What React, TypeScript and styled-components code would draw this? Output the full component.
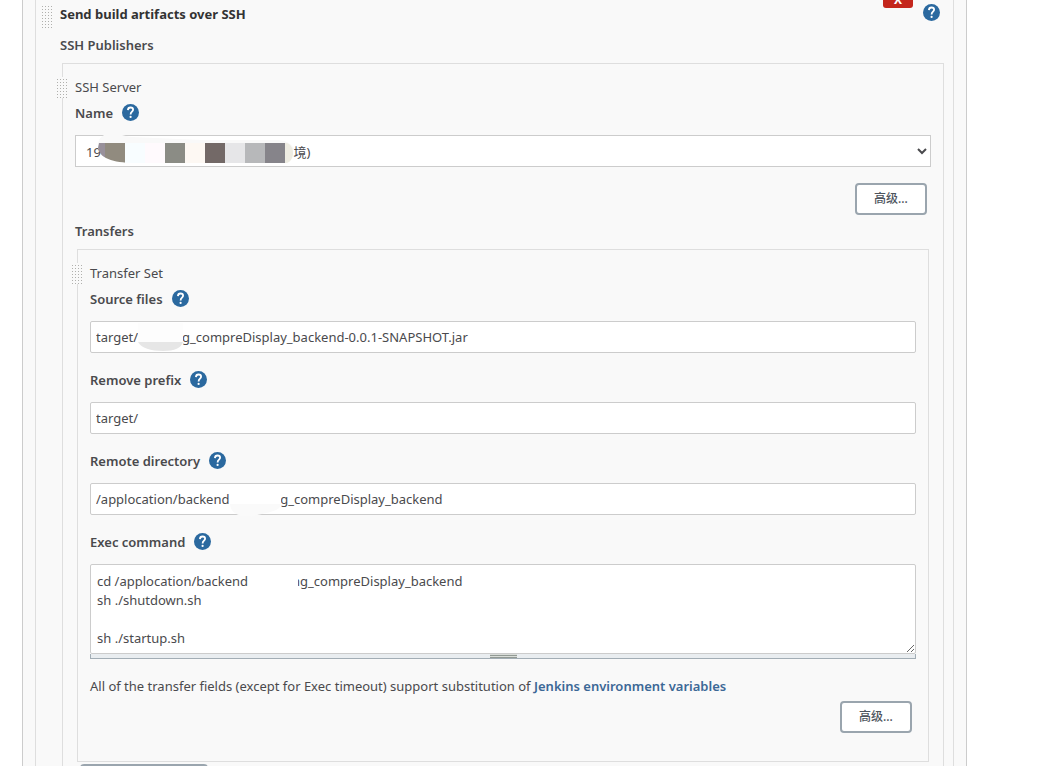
import React, { useState } from "react";
import styled, { createGlobalStyle } from "styled-components";

const GlobalStyle = createGlobalStyle`
  *, *::before, *::after { box-sizing: border-box; }
  body {
    margin: 0;
    background: #fff;
    color: #4a4a4d;
    font: 400 13px/20px "Noto Sans", "Noto Sans CJK SC", sans-serif;
  }
`;

const Viewport = styled.div`
  height: 100vh;
  overflow: hidden;
`;

const Panel = styled.main`
  margin: -20px 84px 0 22px;
  padding: 0 12px;
  background: #f9f9f9;
  border: solid #ccc;
  border-width: 0 1px;
`;

const Chunk = styled.section`
  padding: 20px 9px 60px 0;
  border: solid #dedede;
  border-width: 0 1px;
`;

const Header = styled.header`
  display: flex;
  align-items: flex-start;
  height: 35px;
  padding: 4px 4px 0 5px;
`;

const Title = styled.h2`
  flex: 1;
  margin: 0 0 0 7px;
  font-size: 13px;
  line-height: 20px;
  font-weight: 700;
  color: #333;
`;

const DeleteButton = styled.button`
  display: flex;
  align-items: flex-end;
  justify-content: center;
  width: 30px;
  height: 24px;
  margin: -20px 10px 0 0;
  padding: 0;
  border: 0;
  border-radius: 3px;
  background: #c4261c;
  color: #fff;
  font: 700 12px/16px "Noto Sans", sans-serif;
`;

const HelpButton = styled.button`
  display: block;
  width: 17px;
  height: 17px;
  padding: 0;
  border: 0;
  background: none;
`;

const Grip = styled.span<{ $overBorder?: boolean }>`
  width: 12px;
  height: ${(p) => (p.$overBorder ? 21 : 24)}px;
  background:
    linear-gradient(#f9f9f9 2px, transparent 2px) 0 0 / 3px 3px,
    repeating-linear-gradient(90deg, #f9f9f9 0 1px, #b0b0ad 1px 2px, #f9f9f9 2px 3px);
  ${(p) => p.$overBorder && "position: absolute; left: -7px; top: 13px;"}
`;

const SectionTitle = styled.h3<{ $inset?: boolean }>`
  margin: ${(p) => (p.$inset ? "0 0 8px 24px" : "6px 0 8px")};
  font-size: 13px;
  line-height: 20px;
  font-weight: 600;
`;

const Box = styled.div<{ $nested?: boolean }>`
  position: relative;
  margin: ${(p) => (p.$nested ? "0 2px" : "0 0 0 26px")};
  padding: 13px 12px ${(p) => (p.$nested ? 28 : 40)}px;
  border: 1px solid #dedede;
`;

const BoxName = styled.div`
  margin-bottom: 6px;
`;

const Field = styled.div<{ $compact?: boolean }>`
  margin-bottom: ${(p) => (p.$compact ? 16 : 17)}px;
`;

const LabelRow = styled.div`
  display: flex;
  align-items: center;
  gap: 9px;
  height: 20px;
  margin-bottom: 12px;

  label { font-weight: 600; }
  button { margin-bottom: 2px; }
`;

const Control = styled.div`
  position: relative;
`;

const controlStyle = `
  display: block;
  width: 100%;
  border: 1px solid #ccc;
  background: #fff;
  color: #4a4a4d;
  font: inherit;
  outline: 0;
`;

const TextInput = styled.input`
  ${controlStyle}
  height: 32px;
  padding: 0 5px;
  border-radius: 2px;
`;

const Select = styled.select`
  ${controlStyle}
  height: 32px;
  padding: 2px 6px 0;
  border-radius: 0;
`;

const TextArea = styled.textarea`
  ${controlStyle}
  height: 90px;
  padding: 7px 6px 0;
  border-radius: 2px;
  line-height: 19px;
  resize: vertical;
  overflow: hidden;
`;

const ResizeBar = styled.div`
  display: flex;
  justify-content: center;
  height: 5px;
  border: solid #a2adb5;
  border-width: 0 1px 1px;
  background: #e9edf0;

  &::after {
    content: "";
    width: 27px;
    background: repeating-linear-gradient(#d9ddd9 0 1px, #929a94 1px 2px);
  }
`;

const Smudge = styled.svg<{ $left: number }>`
  position: absolute;
  left: ${(p) => p.$left}px;
  top: 0;
  overflow: visible;
  pointer-events: none;
`;

const Note = styled.p`
  margin: 0 0 5px;
  a { font-weight: 600; color: #3c6896; text-decoration: none; }
`;

const Actions = styled.div`
  display: flex;
  justify-content: flex-end;
  padding-right: 4px;
`;

const Button = styled.button<{ $wide?: boolean }>`
  width: ${(p) => (p.$wide ? 128 : 72)}px;
  height: 32px;
  padding: 0;
  border: 2px solid #9aa5ae;
  border-radius: 4px;
  background: #fff;
  color: #4d545d;
  font: 500 12px/28px "Noto Sans", "Noto Sans CJK SC", sans-serif;
`;

const AddRow = styled.div`
  padding: 2px 5px;
`;

const gap = (n: number) => "\u00a0".repeat(n);

function Help({ topic }: { topic: string }) {
  return (
    <HelpButton type="button" aria-label={`Help for ${topic}`}>
      <svg width="17" height="17" viewBox="0 0 17 17" display="block">
        <circle cx="8.5" cy="8.5" r="8.5" fill="#2b699f" />
        <path d="M5.9 6.1C6 4.3 7.1 3.5 8.5 3.5s2.6.9 2.6 2.3c0 1.9-2.5 2-2.5 4.6" fill="none" stroke="#fff" strokeWidth="1.8" />
        <circle cx="8.6" cy="12.9" r="1.1" fill="#fff" />
      </svg>
    </HelpButton>
  );
}

function Label({ id, text }: { id: string; text: string }) {
  return (
    <LabelRow>
      <label htmlFor={id}>{text}</label>
      <Help topic={text} />
    </LabelRow>
  );
}

function InputField({ id, label, initial, children }: { id: string; label: string; initial: string; children?: React.ReactNode }) {
  const [value, setValue] = useState(initial);
  return (
    <Field>
      <Label id={id} text={label} />
      <Control>
        <TextInput id={id} value={value} spellCheck={false} onChange={(e) => setValue(e.target.value)} />
        {children}
      </Control>
    </Field>
  );
}

const mosaic = ["#918b7f", "#f8fdff", "#fffafd", "#8b8c85", "#fdf8f3", "#736967", "#e6e6e8", "#b7b8ba", "#86848a"];

export default function App() {
  return (
    <Viewport>
      <GlobalStyle />
      <Panel>
        <Chunk>
          <Header>
            <Grip />
            <Title>Send build artifacts over SSH</Title>
            <DeleteButton type="button">X</DeleteButton>
            <Help topic="SSH" />
          </Header>
          <SectionTitle $inset>SSH Publishers</SectionTitle>
          <Box>
            <Grip $overBorder />
            <BoxName>SSH Server</BoxName>
            <Field $compact>
              <Label id="server" text="Name" />
              <Control>
                <Select id="server">
                  <option>{`19${gap(57)}境)`}</option>
                </Select>
                <Smudge $left={22} width="200" height="32">
                  <path d="M1 14C0 5 4 0 11 -1h8c6 0 10 3 16 3l70 3h75c9 0 15 4 17 9L195 16H6z" fill="#f9f9f9" />
                  <clipPath id="blot">
                    <path d="M2 8H190C198 11 198 25 190 28H40C20 28 3 25 1 13z" />
                  </clipPath>
                  <g clipPath="url(#blot)">
                    <rect width="8" height="20" y="8" fill="#98909a" />
                    {mosaic.map((fill, i) => (
                      <rect key={fill} x={8 + i * 20} y="8" width="20" height="20" fill={fill} />
                    ))}
                    <rect x="188" y="8" width="10" height="20" fill="#eeece2" />
                  </g>
                </Smudge>
              </Control>
            </Field>
            <Actions>
              <Button type="button">高级...</Button>
            </Actions>
            <SectionTitle>Transfers</SectionTitle>
            <Box $nested>
              <Grip $overBorder />
              <BoxName>Transfer Set</BoxName>
              <InputField id="source" label="Source files" initial={`target/${gap(13)}g_compreDisplay_backend-0.0.1-SNAPSHOT.jar`}>
                <Smudge $left={48} width="46" height="32">
                  <path d="M0 2h45v19H0z" fill="#fdfdfd" />
                  <path d="M0 21h45c-2 6-8 9-20 9S3 27 0 21z" fill="#e6e6e6" />
                </Smudge>
              </InputField>
              <InputField id="prefix" label="Remove prefix" initial="target/" />
              <InputField id="remote" label="Remote directory" initial={`/applocation/backend${gap(15)}g_compreDisplay_backend`}>
                <Smudge $left={139} width="53" height="34">
                  <path d="M3 3h49v18H0z" fill="#fff" />
                  <path d="M1 21h51c0 8-18 9-28 12-12 1-22-1-23-12z" fill="#fafafa" />
                </Smudge>
              </InputField>
              <Field>
                <Label id="exec" text="Exec command" />
                <Control>
                  <TextArea
                    id="exec"
                    spellCheck={false}
                    defaultValue={`cd /applocation/backend${gap(13)}ng_compreDisplay_backend\nsh ./shutdown.sh\n\nsh ./startup.sh`}
                  />
                  <Smudge $left={161} width="49" height="30">
                    <path d="M2 5h45v22H0z" fill="#fff" />
                  </Smudge>
                  <ResizeBar />
                </Control>
              </Field>
              <Note>
                All of the transfer fields (except for Exec timeout) support substitution of{" "}
                <a href="#variables">Jenkins environment variables</a>
              </Note>
              <Actions>
                <Button type="button">高级...</Button>
              </Actions>
            </Box>
            <AddRow>
              <Button type="button" $wide aria-label="Add Transfer Set" />
            </AddRow>
          </Box>
        </Chunk>
      </Panel>
    </Viewport>
  );
}
